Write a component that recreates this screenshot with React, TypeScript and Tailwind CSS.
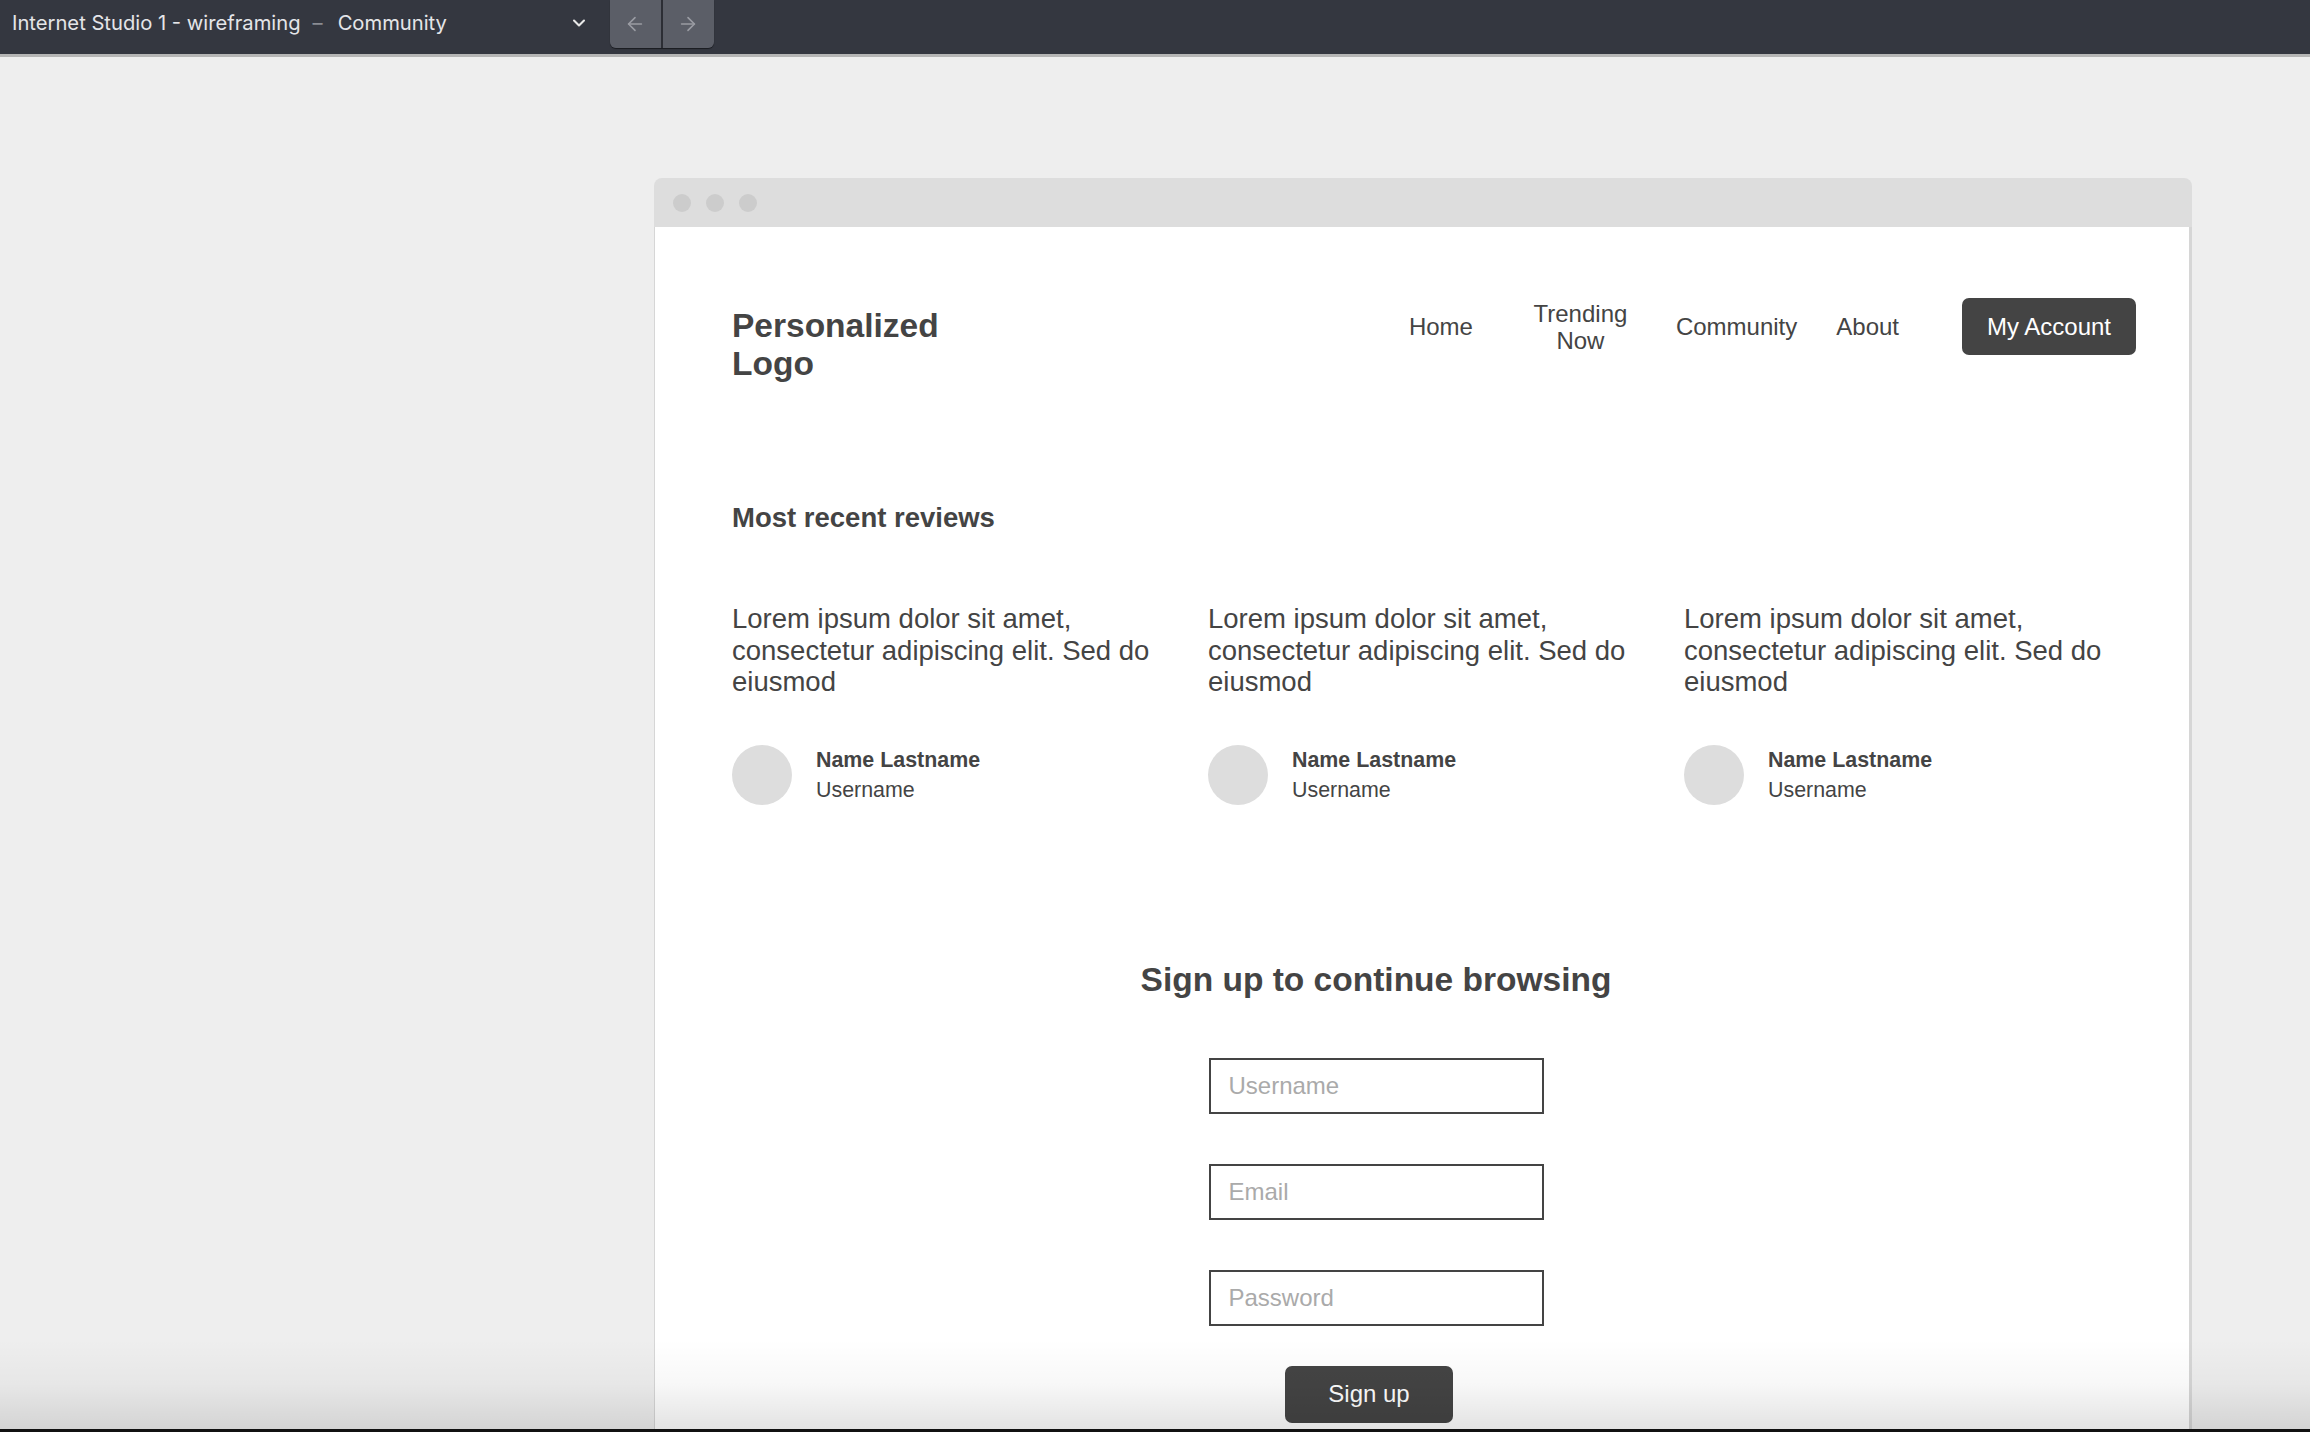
import React from "react";
import { ArrowLeft, ArrowRight, ChevronDown } from "lucide-react";

const wf = { fontFamily: '"Liberation Sans", Arial, sans-serif' };

function Review() {
  return (
    <div className="flex flex-col">
      <p className="text-[27.5px] leading-[31.5px] text-[#444444]">
        Lorem ipsum dolor sit amet, consectetur adipiscing elit. Sed do eiusmod
      </p>
      <div className="mt-[47px] flex items-center">
        <div className="h-[60px] w-[60px] shrink-0 rounded-full bg-[#dddddd]" />
        <div className="ml-[24px] flex flex-col text-[21.4px] leading-[30px] text-[#444444]">
          <span className="font-bold">Name Lastname</span>
          <span>Username</span>
        </div>
      </div>
    </div>
  );
}

function Field({ placeholder }: { placeholder: string }) {
  return (
    <div className="flex h-[56px] w-[335px] items-center border-2 border-[#444444] bg-white pl-[18px] text-[24px] text-[#aaaaaa]">
      {placeholder}
    </div>
  );
}

export default function App() {
  return (
    <div className="relative h-[1432px] w-[2310px] overflow-hidden bg-[#eeeeee]">
      {/* top bar */}
      <div
        className="flex h-[54px] items-start bg-[#343740] text-[20.2px] text-[#e4e5e8]"
        style={{ fontFamily: 'Inter, "Noto Sans", sans-serif' }}
      >
        <div className="flex h-[46px] items-center pl-[12px]">
          <span>Internet Studio 1 - wireframing</span>
          <span className="ml-[12px] text-[#8a8c93]">–</span>
          <span className="ml-[15px]">Community</span>
        </div>
        <div className="ml-[122px] flex h-[46px] items-center">
          <ChevronDown size={20} strokeWidth={2.5} className="text-[#e8e8e8]" />
        </div>
        <div className="ml-[21px] flex h-[48px] overflow-hidden rounded-b-[6px] shadow-[0_1px_1px_rgba(0,0,0,0.5)]">
          <div className="flex w-[51px] items-center justify-center bg-[#5b5e67]">
            <ArrowLeft size={22} strokeWidth={1.75} className="text-[#9a9ca3]" />
          </div>
          <div className="w-[2px] bg-[#2c2e35]" />
          <div className="flex w-[51px] items-center justify-center bg-[#5b5e67]">
            <ArrowRight size={22} strokeWidth={1.75} className="text-[#9a9ca3]" />
          </div>
        </div>
      </div>
      <div className="h-[3px] bg-[#b5b5b5]" />

      {/* canvas */}
      <div className="pl-[654px] pt-[121px]" style={wf}>
        <div className="w-[1538px]">
          <div className="flex h-[49px] items-center gap-[15px] rounded-t-[8px] bg-[#dddddd] pl-[19px]">
            <div className="h-[18px] w-[18px] rounded-full bg-[#cccccc]" />
            <div className="h-[18px] w-[18px] rounded-full bg-[#cccccc]" />
            <div className="h-[18px] w-[18px] rounded-full bg-[#cccccc]" />
          </div>
          <div className="h-[1300px] border-l border-r-[3px] border-[#d6d6d6] bg-white pl-[77px] pr-[53px] pt-[71px] text-[#444444]">
            {/* header */}
            <div className="flex items-start justify-between">
              <div className="mt-[9px] text-[33.5px] font-bold leading-[38px]">
                Personalized
                <br />
                Logo
              </div>
              <div className="flex items-center text-[24px]">
                <span>Home</span>
                <span className="ml-[60px] w-[95px] text-center leading-[27px]">
                  Trending
                  <br />
                  Now
                </span>
                <span className="ml-[48px]">Community</span>
                <span className="ml-[39px]">About</span>
                <div className="ml-[63px] flex h-[57px] w-[174px] items-center justify-center rounded-[7px] bg-[#444444] text-white">
                  My Account
                </div>
              </div>
            </div>

            {/* reviews */}
            <div className="mt-[119px] text-[27.5px] font-bold leading-[32px]">Most recent reviews</div>
            <div className="mt-[69px] grid grid-cols-3 gap-[24px]">
              <Review />
              <Review />
              <Review />
            </div>

            {/* sign up */}
            <div className="mt-[156px] flex w-[1288px] flex-col items-center">
              <div className="text-[33.5px] font-bold leading-[38px]">Sign up to continue browsing</div>
              <div className="mt-[59px] flex flex-col gap-[50px]">
                <Field placeholder="Username" />
                <Field placeholder="Email" />
                <Field placeholder="Password" />
              </div>
              <div className="mr-[14px] mt-[40px] flex h-[57px] w-[168px] items-center justify-center rounded-[7px] bg-[#444444] text-[24px] text-white">
                Sign up
              </div>
            </div>
          </div>
        </div>
      </div>

      {/* bottom shadow */}
      <div className="pointer-events-none absolute inset-x-0 bottom-[3px] h-[90px] bg-gradient-to-b from-transparent via-black/[0.03] to-black/[0.11]" />
      <div className="absolute inset-x-0 bottom-0 h-[3px] bg-[#111111]" />
    </div>
  );
}
